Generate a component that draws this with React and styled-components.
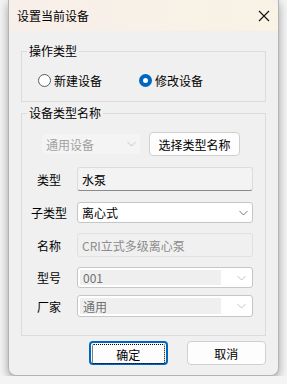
import React from "react"
import styled, { createGlobalStyle } from "styled-components"

const Global = createGlobalStyle`
  body {
    margin: 0;
    background: #f4f4f4;
    font-family: "Noto Sans CJK SC", "Noto Sans", sans-serif;
    font-size: 12px;
    color: #000;
  }
`

const Window = styled.div`
  box-sizing: border-box;
  margin: 0 8px;
  width: 271px;
  height: 376px;
  border: 1px solid #b4b4b4;
  border-top: none;
  border-radius: 0 0 8px 8px;
  background: #f0f0f0;
  box-shadow: 0 3px 10px rgba(0, 0, 0, 0.35);
  display: flex;
  flex-direction: column;
  overflow: hidden;
`

const TitleBar = styled.div`
  height: 31px;
  display: flex;
  align-items: center;
  justify-content: space-between;
  padding: 0 8px 0 8px;
  background: linear-gradient(90deg, #f8efea, #f8f3e5);
  border-top-left-radius: 8px;
  border-top-right-radius: 8px;
  font-size: 12px;
`

const Body = styled.div`
  padding: 13px 12px 0 12px;
  display: flex;
  flex-direction: column;
`

const Group = styled.fieldset`
  margin: 0;
  padding: ${(p) => p.$pad};
  border: 1px solid #dcdcdc;
  height: ${(p) => p.$h}px;
  box-sizing: border-box;
  margin-top: ${(p) => p.$mt || 0}px;
  legend {
    padding: 0 2px;
    margin-left: 5px;
    font-size: 12px;
    line-height: 14px;
  }
`

const RadioRow = styled.div`
  display: flex;
  align-items: center;
  padding-left: 16px;
`

const Radio = styled.label`
  display: flex;
  align-items: center;
  width: ${(p) => p.$w}px;
  gap: 3px;
`

const Dot = styled.span`
  box-sizing: border-box;
  width: 13px;
  height: 13px;
  border-radius: 50%;
  border: ${(p) => (p.$on ? "4px solid #0067c0" : "1px solid #5c5c5c")};
  background: #fff;
`

const Row = styled.div`
  display: flex;
  align-items: center;
  margin-top: ${(p) => p.$mt}px;
`

const Label = styled.div`
  width: 40px;
  margin-left: 7px;
  margin-right: 8px;
  text-align: center;
  white-space: nowrap;
`

const Field = styled.div`
  box-sizing: border-box;
  width: ${(p) => p.$w || 176}px;
  height: ${(p) => p.$h}px;
  display: flex;
  align-items: center;
  justify-content: space-between;
  padding: ${(p) => p.$pad || "0 4px"};
  margin-left: ${(p) => p.$ml || 0}px;
  background: ${(p) => p.$bg || "#fff"};
  border: 1px solid ${(p) => p.$bc || "#c6c6c6"};
  border-bottom-color: ${(p) => p.$bb || p.$bc || "#c6c6c6"};
  border-radius: 3px;
  color: ${(p) => p.$color || "#000"};
`

const Inner = styled.div`
  flex: 1;
  height: 100%;
  display: flex;
  align-items: center;
  padding-left: 3px;
  background: #efefef;
  margin-right: 16px;
`

const Chevron = styled.svg`
  width: 9px;
  height: 6px;
  flex: none;
`

const Button = styled.button`
  box-sizing: border-box;
  width: ${(p) => p.$w}px;
  height: 24px;
  background: #fdfdfd;
  border: 1px solid #d0d0d0;
  border-radius: 4px;
  font-family: inherit;
  font-size: 12px;
  color: #000;
  padding: 0;
  margin-left: ${(p) => p.$ml || 0}px;
`

const PrimaryButton = styled(Button)`
  border: 2px solid #0067c0;
  padding: 1px;
  span {
    display: flex;
    align-items: center;
    justify-content: center;
    height: 100%;
    border: 1px dotted #000;
    border-radius: 2px;
  }
`

const Footer = styled.div`
  display: flex;
  padding-left: 68px;
  margin-top: 5px;
`

const Down = ({ color = "#7a7a7a" }) => (
  <Chevron viewBox="0 0 9 6">
    <path d="M0.5 1 L4.5 5 L8.5 1" fill="none" stroke={color} strokeWidth="1" />
  </Chevron>
)

export default function App() {
  return (
    <>
      <Global />
      <Window>
        <TitleBar>
          <span>设置当前设备</span>
          <svg width="12" height="12" viewBox="0 0 12 12">
            <path d="M1 1 L11 11 M11 1 L1 11" stroke="#111" strokeWidth="1.1" />
          </svg>
        </TitleBar>
        <Body>
          <Group $h={58} $pad="14px 0 0 0">
            <legend>操作类型</legend>
            <RadioRow>
              <Radio $w={101}>
                <Dot />
                新建设备
              </Radio>
              <Radio $w={80}>
                <Dot $on />
                修改设备
              </Radio>
            </RadioRow>
          </Group>
          <Group $h={230} $mt={4} $pad="0">
            <legend>设备类型名称</legend>
            <Row $mt={12}>
              <Field $w={100} $h={22} $ml={19} $bg="#f4f4f4" $bc="#f0f0f0" $color="#a2a2a2">
                通用设备
                <Down color="#c4c4c4" />
              </Field>
              <Button $w={91} $ml={8}>选择类型名称</Button>
            </Row>
            <Row $mt={11}>
              <Label>类型</Label>
              <Field $h={24} $bg="#f3f3f3" $bc="#dcdcdc" $bb="#8a8a8a">水泵</Field>
            </Row>
            <Row $mt={11}>
              <Label>子类型</Label>
              <Field $h={21}>
                离心式
                <Down />
              </Field>
            </Row>
            <Row $mt={10}>
              <Label>名称</Label>
              <Field $h={24} $bg="#f0f0f0" $bc="#e0e0e0" $color="#8c8c8c">CRI立式多级离心泵</Field>
            </Row>
            <Row $mt={10}>
              <Label>型号</Label>
              <Field $h={21} $pad="2px 6px 2px 2px" $color="#6f6f6f">
                <Inner>001</Inner>
                <Down color="#c4c4c4" />
              </Field>
            </Row>
            <Row $mt={7}>
              <Label>厂家</Label>
              <Field $h={22} $pad="2px 6px 2px 2px" $color="#6f6f6f">
                <Inner>通用</Inner>
                <Down color="#c4c4c4" />
              </Field>
            </Row>
          </Group>
          <Footer>
            <PrimaryButton $w={85}>
              <span>确定</span>
            </PrimaryButton>
            <Button $w={86} $ml={19}>取消</Button>
          </Footer>
        </Body>
      </Window>
    </>
  )
}
